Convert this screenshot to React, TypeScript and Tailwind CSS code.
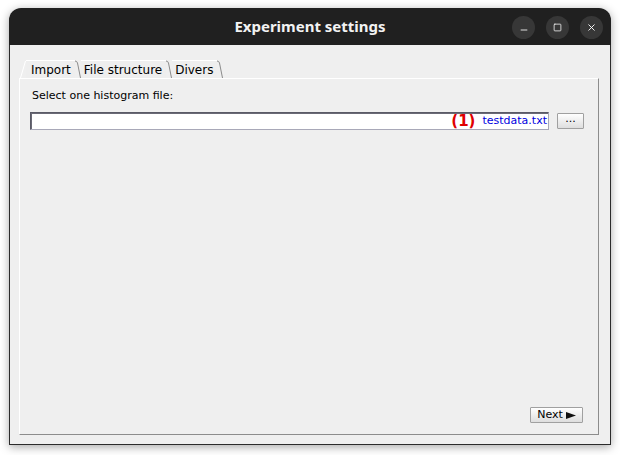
import { Minus, Square, X } from "lucide-react";

const swing = { fontFamily: '"DejaVu Sans", "Liberation Sans", sans-serif' };

function Tab({ label, first }: { label: string; first?: boolean }) {
  return (
    <div className="relative flex h-[18px] items-end">
      {first && (
        <svg width="6" height="18" className="block">
          <path d="M0.5 18 L5.5 1" stroke="#ffffff" strokeWidth="1" fill="none" />
        </svg>
      )}
      <div
        className={`h-[18px] border-t border-white bg-[#eeeeee] pt-[1px] text-[12px] leading-[16px] text-black ${first ? "pl-[5px]" : "pl-[3px]"} pr-[4px]`}
      >
        {label}
      </div>
      <svg width="6" height="18" className="block">
        <path d="M0 1 Q2 1 2.5 3 L5.5 18" stroke="#8a8a8a" strokeWidth="1" fill="none" />
      </svg>
    </div>
  );
}

export default function App() {
  return (
    <div className="h-[455px] w-[620px] bg-white pl-[9px] pt-[8px]" style={swing}>
      <div className="flex h-[437px] w-[602px] flex-col overflow-hidden rounded-t-[12px] shadow-[0_2px_10px_rgba(0,0,0,0.35)]">
        {/* Title bar */}
        <div className="grid h-[37px] shrink-0 grid-cols-[1fr_auto_1fr] items-center bg-[#202020]">
          <div />
          <div
            className="text-[15px] font-bold text-[#f2f2f2]"
            style={{ fontFamily: '"Noto Sans", "DejaVu Sans", sans-serif' }}
          >
            Experiment settings
          </div>
          <div className="flex items-center justify-end gap-[11px] pr-[8px] pt-[1px]">
            <div className="flex h-[23px] w-[23px] items-center justify-center rounded-full bg-[#373737]">
              <Minus size={10} strokeWidth={2} className="mt-[5px] text-white" />
            </div>
            <div className="flex h-[23px] w-[23px] items-center justify-center rounded-full bg-[#373737]">
              <Square size={9} strokeWidth={2} className="text-white" />
            </div>
            <div className="flex h-[23px] w-[23px] items-center justify-center rounded-full bg-[#373737]">
              <X size={11} strokeWidth={2} className="text-white" />
            </div>
          </div>
        </div>

        {/* Window body */}
        <div className="flex flex-1 flex-col border-x border-b border-[#2b2b2b] bg-[#efefef] pb-[9px] pl-[9px] pr-[11px] pt-[15px]">
          {/* Tabs */}
          <div className="flex h-[18px] pl-[1px]">
            <Tab label="Import" first />
            <Tab label="File structure" />
            <Tab label="Divers" />
          </div>

          {/* Panel */}
          <div className="flex flex-1 flex-col border border-b-[#8c8c8c] border-l-white border-r-[#8c8c8c] border-t-white bg-[#efefef] px-[10px] pb-[11px] pt-[10px]">
            <div className="pl-[2px] text-[11px] leading-[14px] text-black">Select one histogram file:</div>

            <div className="mt-[9px] flex items-center gap-[8px]">
              <div className="flex h-[18px] w-[519px] items-center justify-end border border-[#a8a8b8] border-l-[#5a5a66] border-t-[#5a5a66] bg-white pr-[1px] shadow-[inset_1px_1px_0_#6a6a76]">
                <span className="mr-[7px] text-[15px] font-bold leading-[16px] text-[#e00000]">(1)</span>
                <span className="text-[11px] leading-[14px] text-[#0000e0]">testdata.txt</span>
              </div>
              <button className="flex h-[16px] w-[27px] items-center justify-center rounded-[1px] border border-[#a0a0a0] bg-gradient-to-b from-white to-[#dedede] pb-[4px] text-[11px] leading-[10px] text-black">
                ...
              </button>
            </div>

            <div className="flex-1" />

            <div className="flex justify-end pr-[5px]">
              <button className="flex h-[16px] w-[53px] items-center justify-center gap-[3px] rounded-[1px] border border-[#a0a0a0] bg-gradient-to-b from-white to-[#dedede] text-[11px] leading-[14px] text-black">
                Next
                <svg width="10" height="7" viewBox="0 0 10 7">
                  <path d="M0 0 L10 3.5 L0 7 Z" fill="#111" />
                </svg>
              </button>
            </div>
          </div>
        </div>
      </div>
    </div>
  );
}
